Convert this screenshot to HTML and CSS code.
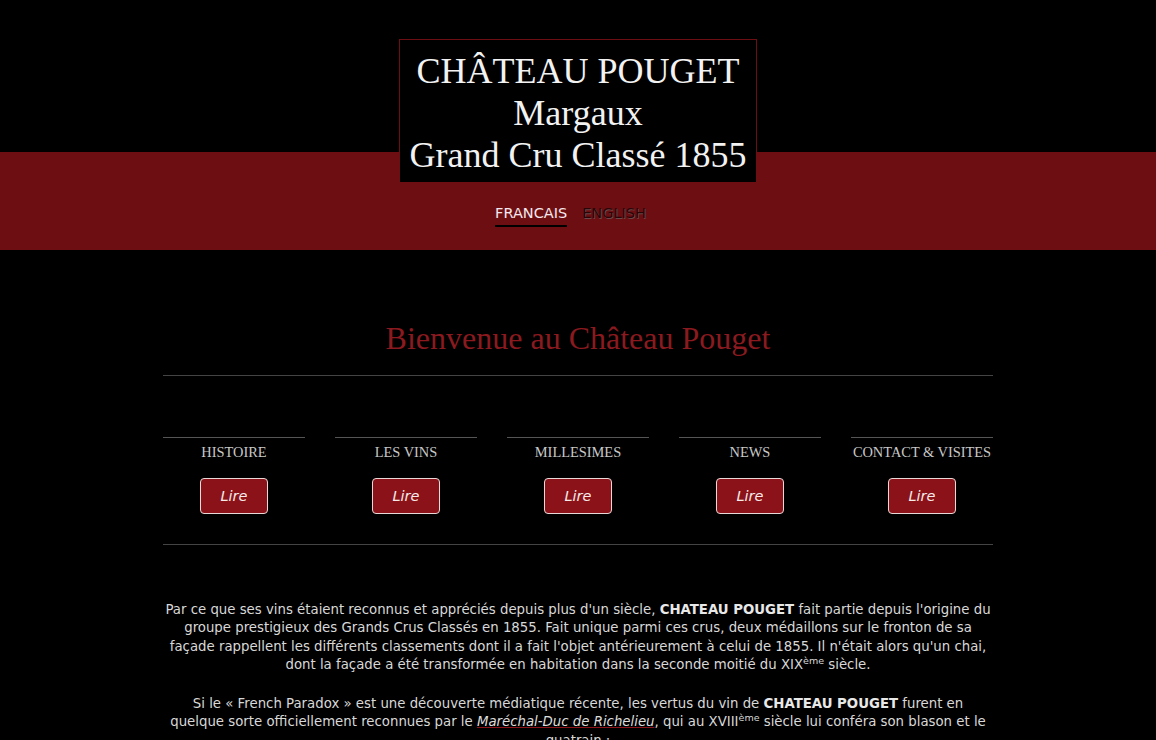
FILE: index.html
```html
<!DOCTYPE html>
<html lang="fr">
<head>
<meta charset="utf-8">
<title>Château Pouget</title>
<link rel="stylesheet" href="styles.css">
</head>
<body>
<header class="header">
  <div class="header-top">
    <div class="logo">
      <div class="logo-line">CHÂTEAU POUGET</div>
      <div class="logo-line">Margaux</div>
      <div class="logo-line">Grand Cru Classé 1855</div>
    </div>
  </div>
  <div class="header-band">
    <nav class="lang">
      <a class="lang-link active" href="#">FRANCAIS</a>
      <a class="lang-link inactive" href="#">ENGLISH</a>
    </nav>
  </div>
</header>
<main class="main">
  <h1 class="title">Bienvenue au Château Pouget</h1>
  <section class="cards">
    <div class="card"><h2 class="card-title">HISTOIRE</h2><a class="btn" href="#">Lire</a></div>
    <div class="card"><h2 class="card-title">LES VINS</h2><a class="btn" href="#">Lire</a></div>
    <div class="card"><h2 class="card-title">MILLESIMES</h2><a class="btn" href="#">Lire</a></div>
    <div class="card"><h2 class="card-title">NEWS</h2><a class="btn" href="#">Lire</a></div>
    <div class="card"><h2 class="card-title">CONTACT &amp; VISITES</h2><a class="btn" href="#">Lire</a></div>
  </section>
  <section class="text">
    <p>Par ce que ses vins étaient reconnus et appréciés depuis plus d'un siècle, <b>CHATEAU POUGET</b> fait partie depuis l'origine du groupe prestigieux des Grands Crus Classés en 1855. Fait unique parmi ces crus, deux médaillons sur le fronton de sa façade rappellent les différents classements dont il a fait l'objet antérieurement à celui de 1855. Il n'était alors qu'un chai, dont la façade a été transformée en habitation dans la seconde moitié du XIX<sup>ème</sup> siècle.</p>
    <p>Si le « French Paradox » est une découverte médiatique récente, les vertus du vin de <b>CHATEAU POUGET</b> furent en<br>quelque sorte officiellement reconnues par le <a class="inline-link" href="#">Maréchal-Duc de Richelieu</a>, qui au XVIII<sup>ème</sup> siècle lui conféra son blason et le<br>quatrain :</p>
  </section>
</main>
</body>
</html>
```
FILE: styles.css
```css
html, body {
  margin: 0;
  padding: 0;
  background: #000;
}
body {
  font-family: "DejaVu Sans", Verdana, sans-serif;
  color: #ddd;
}
.header {
  position: relative;
}
.header-top {
  height: 152px;
  background: #000;
}
.header-band {
  height: 98px;
  background: #6d0e12;
}
.logo {
  position: absolute;
  left: 399px;
  top: 39px;
  width: 356px;
  height: 142px;
  border: 1px solid #6d0e12;
  background: #000;
  font-family: "Liberation Serif", "Times New Roman", serif;
  font-size: 36px;
  line-height: 42px;
  color: #f2f2f2;
  text-align: center;
}
.logo-line:first-child {
  margin-top: 10px;
}
.lang {
  display: flex;
  justify-content: center;
  gap: 15px;
  padding-top: 51px;
  padding-right: 15px;
}
.lang-link {
  font-family: "DejaVu Sans", Verdana, sans-serif;
  font-size: 14.5px;
  text-decoration: none;
  line-height: 20px;
  padding-bottom: 2px;
}
.active {
  color: #f4e8ee;
  border-bottom: 2px solid #000;
}
.inactive {
  color: #2a0507;
  text-shadow: 1px 1px 0 #6a4a4a;
}
.main {
  width: 830px;
  margin: 0 auto;
}
.title {
  margin: 0;
  padding-top: 70px;
  padding-bottom: 19px;
  font-family: "Liberation Serif", "Times New Roman", serif;
  font-weight: normal;
  font-size: 32px;
  line-height: 36px;
  color: #8a1a1f;
  text-align: center;
  border-bottom: 1px solid #444;
}
.cards {
  display: grid;
  grid-template-columns: repeat(5, 142px);
  column-gap: 30px;
  margin-top: 61px;
  padding-bottom: 30px;
  border-bottom: 1px solid #444;
}
.card {
  border-top: 1px solid #555;
  display: flex;
  flex-direction: column;
  align-items: center;
}
.card-title {
  margin: 0;
  padding-top: 5px;
  font-family: "Liberation Serif", "Times New Roman", serif;
  font-weight: normal;
  font-size: 14.4px;
  line-height: 18px;
  color: #c8c8c8;
  white-space: nowrap;
}
.btn {
  margin-top: 17px;
  width: 66px;
  height: 34px;
  border: 1px solid #e8d8d8;
  border-radius: 4px;
  background: #8b1218;
  color: #f6eaea;
  font-style: italic;
  font-size: 14.5px;
  line-height: 34px;
  text-align: center;
  text-decoration: none;
}
.text {
  padding-top: 56px;
  text-align: center;
  font-size: 13.3px;
  line-height: 18.3px;
  color: #d8d8d8;
}
.text p {
  margin: 0 0 21px;
}
.text b {
  color: #e8e8e8;
}
.text sup {
  font-size: 9.5px;
  line-height: 0;
  vertical-align: 5px;
}
.inline-link {
  color: #ddd;
  font-style: italic;
  text-decoration: underline;
  text-decoration-color: #8b1218;
}
```
